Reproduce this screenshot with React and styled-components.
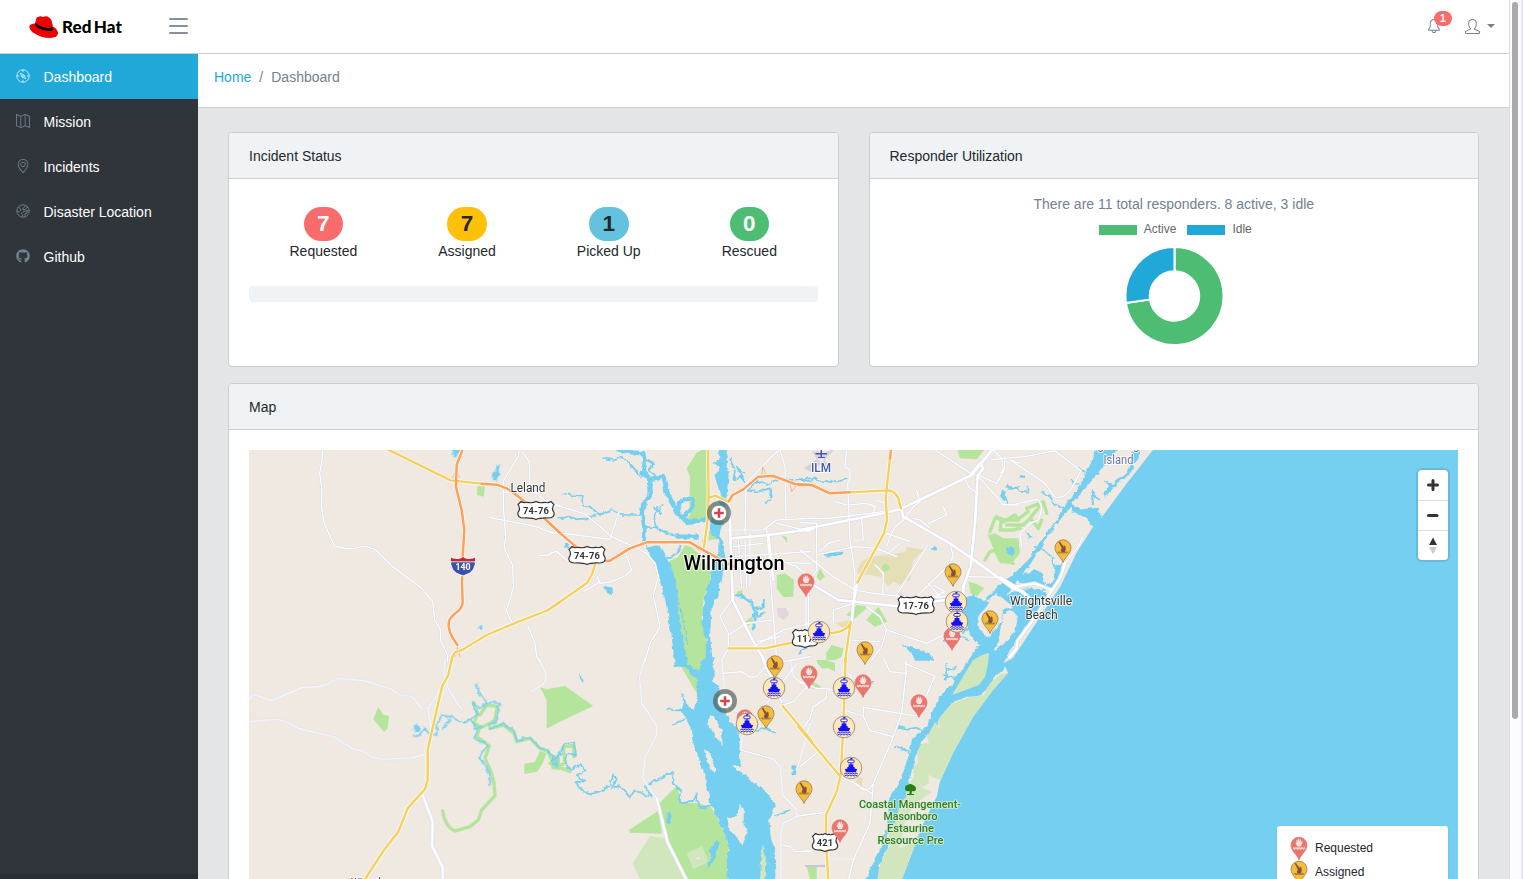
import React from "react";
import styled, { createGlobalStyle } from "styled-components";
import { SlMap, SlLocationPin, SlBell, SlUser } from "react-icons/sl";
import { FaGithub } from "react-icons/fa";

const GlobalStyle = createGlobalStyle`
  *, *::before, *::after { box-sizing: border-box; }
  html, body { margin: 0; height: 100%; overflow: hidden; }
  body {
    font: 14px/21px "Liberation Sans", Arial, sans-serif;
    color: #23282c;
    background: #e4e5e6;
  }
`;

const Frame = styled.div`
  display: flex;
  width: 100vw;
  height: 100vh;
  overflow: hidden;
`;
const Page = styled.div`
  flex: 1;
  min-width: 0;
  display: flex;
  flex-direction: column;
`;
const ScrollTrack = styled.div`
  width: 14px;
  padding: 2px 0 0 2px;
  background: #fcfcfc;
  border-left: 1px solid #dcdde2;
  border-right: 2px solid #e8e8ee;
`;
const ScrollThumb = styled.div`
  width: 6px;
  height: 717px;
  border-radius: 3px;
  background: #a9a9ae;
`;

const TopBar = styled.header`
  height: 54px;
  flex: none;
  display: flex;
  align-items: center;
  background: #fff;
  border-bottom: 1px solid #c8ced3;
  color: #73818f;
`;
const Brand = styled.div`
  width: 155px;
  padding-left: 29px;
  display: flex;
  align-items: center;
`;
const BrandHat = styled.svg`
  width: 30px;
  height: 23px;
  margin: 2px 3px 0 0;
`;
const BrandName = styled.span`
  font: 900 17px/20px Lato, sans-serif;
  letter-spacing: 0.1px;
  word-spacing: -2px;
  color: #000;
`;
const MenuButton = styled.div`
  width: 19px;
  height: 16px;
  margin: 0 0 1px 13.5px;
  display: flex;
  flex-direction: column;
  justify-content: space-between;
`;
const MenuBar = styled.i`
  height: 2px;
  border-radius: 1px;
  background: #84919d;
`;
const Tools = styled.div`
  margin-left: auto;
  padding: 0 14px 1px 0;
  display: flex;
  align-items: center;
`;
const Alerts = styled.div`
  position: relative;
  width: 14px;
  height: 14px;
  margin-right: 24px;
  font-size: 14px;
  line-height: 0;
`;
const AlertCount = styled.span`
  position: absolute;
  left: 7px;
  top: -8px;
  width: 18px;
  height: 15px;
  border-radius: 8px;
  background: #f86c6b;
  color: #fff;
  font: 700 10.5px/15px "Liberation Sans", sans-serif;
  text-align: center;
`;
const UserMenu = styled.div`
  display: flex;
  align-items: center;
  font-size: 15px;
`;
const Caret = styled.i`
  margin-left: 7px;
  border: 4px solid transparent;
  border-top-color: #73818f;
  border-bottom: 0;
`;

const Body = styled.div`
  flex: 1;
  min-height: 0;
  display: flex;
`;
const Sidebar = styled.nav`
  width: 198px;
  flex: none;
  display: flex;
  flex-direction: column;
  background: #2f353a;
`;
const NavItem = styled.a`
  height: 45px;
  flex: none;
  display: flex;
  align-items: center;
  gap: 14px;
  padding: 1px 16px 0 15.5px;
  color: #fff;
  background: ${(p) => (p.$active ? "#20a8d8" : "transparent")};
  svg {
    width: 14px;
    height: 14px;
    margin-top: -2px;
    color: ${(p) => (p.$active ? "#d2eef7" : "#73818f")};
  }
`;
const SidebarFoot = styled.div`
  margin-top: auto;
  height: 5px;
  background: #292e33;
`;
const Main = styled.main`
  flex: 1;
  min-width: 0;
  display: flex;
  flex-direction: column;
`;
const Breadcrumb = styled.div`
  height: 54px;
  flex: none;
  padding: 13px 16px;
  display: flex;
  gap: 8px;
  background: #fff;
  border-bottom: 1px solid #c8ced3;
  color: #73818f;
`;
const CrumbLink = styled.a`
  color: #20a8d8;
`;
const Content = styled.div`
  padding: 24px 30px 0;
  display: flex;
  flex-direction: column;
  gap: 16px;
`;
const CardRow = styled.div`
  display: grid;
  grid-template-columns: 1fr 1fr;
  gap: 30px;
`;
const Card = styled.section`
  height: ${(p) => p.$height}px;
  background: #fff;
  border: 1px solid #c8ced3;
  border-radius: 4px;
  overflow: hidden;
`;
const CardHeader = styled.div`
  height: 46px;
  padding: 13px 20px 11px;
  background: #f0f3f5;
  border-bottom: 1px solid #c8ced3;
`;
const CardBody = styled.div`
  padding: ${(p) => p.$top}px 20px 20px;
`;
const StatRow = styled.div`
  display: flex;
  justify-content: space-around;
`;
const Stat = styled.div`
  display: flex;
  flex-direction: column;
  align-items: center;
`;
const StatBadge = styled.span`
  height: 34px;
  padding: 0 13.5px;
  border-radius: 17px;
  font: 700 22.5px/34px "Liberation Sans", sans-serif;
  background: ${(p) => p.$bg};
  color: ${(p) => p.$fg};
`;
const Progress = styled.div`
  height: 16px;
  margin-top: 24px;
  border-radius: 4px;
  background: #f0f3f5;
`;
const Utilization = styled.div`
  display: flex;
  flex-direction: column;
  align-items: center;
  color: #73818f;
`;
const ChartLegend = styled.div`
  display: flex;
  gap: 11px;
  margin: 7px 0 11px;
  padding-left: 3px;
  color: #666;
  font-size: 12px;
  line-height: 14px;
`;
const LegendEntry = styled.span`
  display: flex;
  align-items: flex-start;
  gap: 7px;
`;
const Swatch = styled.i`
  width: 38px;
  height: 10px;
  margin-top: 3px;
  background: ${(p) => p.$color};
`;
const Chart = styled.svg`
  width: 99px;
  height: 98px;
  margin-left: 1px;
`;

const MapBox = styled.div`
  position: relative;
  height: 600px;
  overflow: hidden;
`;
const MapCanvas = styled.svg`
  display: block;
  width: 1209px;
  height: 600px;
  background: #efe9e2;
`;
const Controls = styled.div`
  position: absolute;
  top: 20px;
  right: 10px;
  width: 30px;
  border-radius: 4px;
  background: #fff;
  box-shadow: 0 0 0 2px rgba(0, 0, 0, 0.1);
`;
const Control = styled.div`
  height: 30px;
  border-top: ${(p) => (p.$first ? "0" : "1px solid #ddd")};
  svg { display: block; }
`;
const MapLegend = styled.div`
  position: absolute;
  top: 376px;
  right: 10px;
  width: 171px;
  padding: 10px 13px;
  border-radius: 3px;
  background: #fff;
  box-shadow: 0 1px 2px rgba(0, 0, 0, 0.1);
  font-size: 12px;
`;
const MapLegendRow = styled.div`
  height: 24px;
  display: flex;
  gap: 7px;
  line-height: 25px;
  svg { flex: none; }
`;

const C = {
  water: "#75cff0",
  land: "#efe9e2",
  green: "#b5e59c",
  pale: "#d1e6bd",
  yellow: "#f2d160",
  orange: "#ff9f5e",
};

/* Each tile is drawn at three units per pixel, offset to its own corner. */
const TILES = [
  {
    x: 240, y: 440,
    parks: ["M712,139H735L731,170L711,165Z"],
    lakes: ["M634,10H660V30L656,45L645,50L636,43Z", "M760,97L768,88L770,78L780,76L782,84L776,90L778,104L768,121L758,120Z", "M711,568L717,560L726,558V570Z"],
    white: [
      "M248,30L246,60L239,100L246,150L244,200L252,248L283,318L318,326L348,324L372,318L405,328L460,382L545,445L578,485L584,540L600,565L603,605L623,645V665",
      "M838,30L835,50L808,93L790,122V200L797,292L792,325L818,375L820,445L799,511L815,545",
      "M845,33L868,65L870,130L888,160L920,185L960,197",
      "M747,232L890,260L938,280H960", "M893,348L920,346L948,334L960,344",
      "M790,158L810,155L818,162", "M865,560L885,610L890,650L900,665",
    ],
    yellow: ["M438,26L632,121L725,131", "M960,485L925,510L830,547L740,585L670,628L645,637L636,652V662"],
    orange: ["M725,131L770,134L800,145L828,164L860,190L915,237L960,279", "M668,28L650,75L648,140L665,210L673,270L668,350L666,430L668,485Q668,502 652,515Q630,530 627,545Q622,562 636,590L652,615"],
    ramps: ["M648,92L637,115M650,92L658,112", "M650,615L660,650M652,625L645,650M665,627L655,635"],
  },
  {
    x: 240, y: 660,
    parks: ["M415,140L430,165L447,168L443,205L432,216L400,178Z", "M900,82L920,88L975,78L1060,138L960,185L920,206V120Z", "M853,312L885,305L900,272L920,280L908,310L892,335L853,342Z", "M925,280L960,290V330L935,328Z"],
    greenLines: ["M703,130L712,160L702,190L725,202L750,190L765,180L772,140L740,135L720,165", "M720,200L710,230L735,248L748,258L735,295L755,340L762,370L765,407L725,450L715,480L690,500L645,513Q615,500 608,453", "M750,205L790,195L822,220L830,245L870,235L900,265L925,275L945,320"],
    streams: ["M712,73L713,98L730,112L742,128L778,128L776,150L765,187L750,190V207L790,190L822,212L830,240L870,232L900,265L920,268L940,290V310L948,318L950,290L960,278", "M520,230L535,228L555,205L570,222L590,225L592,190L608,163L628,170L672,188L695,180L715,160L700,145V128L715,145L742,128", "M608,205L632,180", "M695,180L705,205L728,200", "M710,205L706,240L735,248L742,260L717,290L740,320L750,355V375"],
    lakes: ["M522,195L530,190L539,196V212L522,216Z"],
    white: [
      "M27,120L40,103L95,122L185,83L235,80L260,73L295,55L375,63L455,88L475,103L518,112L545,145H565L600,88",
      "M27,185L110,178L150,190L180,207L285,232L340,268L365,272L395,290L425,298L520,294L555,282",
      "M565,147L574,215", "M615,0L612,40L625,85L655,135L668,150", "M898,0L918,40V60L910,72L875,95",
    ],
    wide: ["M548,405L578,485L576,558L608,622V720"],
    yellow: ["M636,-5L625,45L606,80L563,270V360L555,387L503,445L475,515L432,570L370,665"],
  },
  {
    x: 550, y: 440,
    parks: ["M440,38L455,30H470L472,236L405,246L420,225L418,190L420,110L410,85Z", "M405,315L425,322L450,345L480,387L482,425L462,470L455,530L470,600L468,665L440,760L385,665L355,480L355,365L385,350Z", "M680,405L705,400L732,420L730,470L700,472L680,445Z", "M695,287L710,290L712,308Z", "M560,455L578,450V465L562,468Z", "M580,548L605,530L612,545L590,560Z", "M478,275L508,295L475,302Z", "M318,385L338,405L335,418L322,412Z"],
    lakes: [
      "M505,5H535L530,80L536,105L528,190L520,240L508,285L525,320L522,365L516,420L505,462L485,500L480,590L490,680H465L470,600L455,560L456,530L463,475L480,425L485,385L505,340V300L478,275L480,245L500,210L512,170L495,110L510,80L490,70L508,60Z",
      "M288,318L328,320L360,365L378,430L384,500L395,570L415,680H375L364,580L350,500L335,440L318,385Z",
      "M160,435L172,440L185,442L186,466L165,455Z", "M45,303L60,315L55,328L45,318Z",
    ],
    rivers: ["M205,30L250,38L280,40L285,70L278,98L300,118L302,160L275,210L283,260L282,300", "M285,100L300,118L340,108L350,155L380,215L410,246L438,243L467,240", "M380,215L388,190L405,175L427,178L430,195L402,232", "M385,290L440,290"],
    streams: ["M285,55L312,70L295,90L315,105", "M155,55L195,60L215,50L235,65L275,112", "M40,160L72,168L95,170L98,195L125,205L150,225", "M25,235L60,230L80,238L110,235L150,222L185,210L210,225L275,225", "M283,260L320,263L350,280L385,285M320,263L310,235L325,200M325,215L338,195M315,205L330,220", "M390,320L380,340L355,355", "M540,60L555,90L550,120L570,110L585,125L560,80L580,100", "M595,152L620,122L650,135L690,115L720,120L780,115M590,152L625,155L660,145L665,170L650,188"],
    creek: ["M555,465L578,470L603,487L610,505L640,502V478M613,508L612,565M610,505L625,530L640,520"],
    white: ["M0,190L50,205L105,222L185,290L240,315L290,340L315,370L325,410L310,465L330,560L300,610L285,665", "M0,275L180,298L208,212", "M0,340L20,333L50,360L75,370L150,370L180,362", "M228,345L245,390L225,408L185,425L150,430L142,410M150,425L100,455", "M585,280L588,130L660,55L688,30", "M690,30L705,80L708,240", "M520,270L640,270L680,240L780,235", "M550,350L780,335M550,320L640,310", "M565,300L575,445M585,300L590,440M650,265L680,660M600,280L600,435", "M680,250L780,275", "M655,350L740,380L780,410", "M535,585L590,550L665,540M610,620L700,570L780,550", "M545,480L510,530L535,580V625L515,660", "M620,605L690,590", "M768,475V590", "M640,365L780,370"],
    wide: ["M538,190L548,480L610,605L645,665", "M545,295L655,285L790,267", "M655,285L670,420"],
    yellow: ["M474,28L476,170M480,172L495,167L535,185", "M476,170L474,230L462,322", "M-5,510L110,430L125,405L135,375", "M535,625H645L735,606"],
    orange: ["M-5,247L45,292L90,330L120,362L180,362L240,325L290,307H420L450,325L500,352L550,380", "M537,183L548,165L580,148L625,110L670,108L735,132L785,135"],
    ramps: ["M420,309L445,330L462,330L458,300M635,108L638,80L650,108M720,130L725,155L740,135"],
  },
  {
    x: 550, y: 660,
    parks: ["M383,375L392,430L430,428L480,438L505,478L520,510L537,560L530,600L535,665H412L352,545L328,430Z", "M237,510L325,452L336,521L240,518Z", "M410,0L460,0L445,35L420,18Z"],
    pale: ["M300,528L345,535L350,545L405,665H275L247,612Z", "M410,580L457,558L475,605L430,628Z"],
    lakes: [
      "M383,-3L420,18L445,35L460,-5H492L490,65L508,85L510,110L540,185L565,200L572,318H548L590,350L650,395L675,440L658,480L662,530L675,570L677,720H535L530,600L537,560L520,510L480,430L468,355L430,250L420,200L395,150L403,125L430,150L440,120L443,60L405,20Z",
      "M350,460L358,453L365,465L360,492L350,488Z", "M490,552L500,543L512,548L500,580L490,605L470,628L485,590L478,572Z", "M727,318L740,312L738,345L728,342Z", "M87,38L101,65L98,68L90,55Z",
    ],
    land: ["M480,165L493,172L505,190L515,215L518,255L500,235L475,195Z", "M462,268L480,278L495,320V340L480,325Z", "M535,470L560,472L570,430L582,450L580,490L593,515L577,557L555,525L535,512Z", "M438,595L450,590V598L440,600Z"],
    pale2: ["M638,548L647,590L645,665H630L633,600Z"],
    greenLines: ["M0,290L20,320L45,310L40,260L70,255L72,290M0,310L60,335"],
    streams: ["M0,275L10,300L30,285L40,250L72,245L78,285L50,280L45,310L65,330L90,312L108,333L80,345L105,365L78,362L85,380L115,402L145,397L180,375L190,342L200,358L185,385L210,378L240,412L255,390L285,405L305,410L285,378L330,355L370,335L368,370L390,390V430L430,425L438,402L443,430L455,445L485,435", "M400,102L403,145L410,170M355,148L402,153M370,193L410,175", "M620,210L650,205L675,217M675,468L718,450"],
    white: ["M285,-5L268,50L275,130L318,195L320,225L285,290L278,355L320,415", "M515,0L525,120L575,170L590,200L575,235L572,270L670,297L690,320L698,405L740,450V470L700,490L692,520V720", "M520,40L575,35L600,52L620,50L650,15L780,-10", "M650,130L740,10M780,190L740,330", "M695,555L720,560L735,575H780M738,470L780,462", "M700,135L730,125L780,70M720,0L730,50L780,90"],
    wide: ["M320,415L352,545L412,665", "M636,-8L695,125"],
    yellow: ["M698,138L785,243"],
  },
  {
    x: 800, y: 440,
    parks: ["M472,30H553L530,58L480,55Z", "M245,378L258,370L270,382L262,395L248,392Z", "M138,525L170,495L205,500L165,535Z", "M198,540L235,500L262,545L225,560Z", "M505,425L530,432L552,445L530,470L512,460Z", "M78,640L95,615L130,625L125,650L105,660H80Z", "M50,410L60,385L75,410L60,422Z"],
    sand: ["M205,350L262,345L318,335L320,320L370,330L340,360L330,420L300,435L280,425L265,440L240,410L170,400L180,370Z", "M105,550L150,540L140,570Z"],
    greenLines: ["M570,275L585,235L605,235L600,270L640,270L660,265M590,230L610,245L645,225L655,240", "M555,360L570,335L585,330L600,360L640,370"],
    streams: ["M0,120L30,123L45,112L60,125L95,122L110,125L140,118", "M625,150L640,140L660,140M605,152L620,190", "M305,615L340,628L370,640L400,660", "M0,640L20,620"],
    lakes: ["M75,340L130,335L128,344L75,350Z", "M396,322L411,320V334H398Z", "M315,618L345,625L375,632L400,652L390,662H345L335,638Z"],
    white: ["M140,30L135,80L150,90V120L143,130L150,300L165,400L160,480L155,545", "M0,235L85,235L250,215", "M105,185L140,195L200,190L225,200L220,220M225,180L260,190", "M0,248L50,250V390L30,420L0,440", "M0,330L50,370L100,410L165,450L220,460L350,475L440,470", "M50,345L165,320L230,325L290,350M60,335L85,310L120,300", "M185,235L190,300L160,300", "M310,240L285,260L270,290L260,320M260,280L330,305M300,310L265,340", "M303,205L310,240L340,200L360,185L350,150M340,235L360,240L390,265M385,250L440,225L430,200", "M225,375L250,400L248,465M290,465L383,315M350,470L435,385M400,435L435,455L360,490", "M420,470L385,430M450,310L460,350L440,385", "M405,30L520,105M495,120L510,145L535,160M535,105L590,130L610,95L605,55L580,30M630,60L660,70M535,110L590,170L610,195L660,195", "M500,410L610,412M200,500L240,530L260,570L380,610L440,580M260,570L245,620L215,660M150,600L240,605", "M0,435L40,435M25,440V560M160,490L100,510V545"],
    wide: ["M0,270L250,220L300,208L515,105L578,28", "M303,205L310,230L450,310L515,355L640,445L670,455", "M533,105L525,250L512,380L490,440", "M40,435L115,480L230,492L300,500L435,480L490,465V440", "M515,100L540,70L550,85L535,105", "M172,428L160,490L155,545"],
    yellow: ["M270,55L257,175L261,240L252,280L172,428", "M148,157L262,151Q285,152 295,175L303,205", "M90,580Q120,578 135,567Q150,558 152,545L135,665"],
    orange: ["M273,28L270,55", "M-5,135H35L90,160L148,157"],
  },
  {
    x: 800, y: 660,
    parks: ["M50,0H80L105,10V35L85,25L65,25L52,10Z", "M35,62L65,80L35,87Z", "M20,620H50V657H30Z"],
    sand: ["M175,350L188,355L185,380L165,370Z"],
    streams: ["M290,200L325,207L350,203L370,215M285,258L305,265L330,280M440,10L437,60M430,45L470,55M445,30L470,20M210,68H218"],
    white: ["M250,-5L270,35L320,40M315,10L405,48L380,105L348,168L300,160L190,142V170L210,212L280,230M130,150L190,168", "M318,0L318,40L305,160L280,230L220,370L210,490L160,600L145,660", "M120,350L170,372L190,390L210,385L220,370M165,372L215,400", "M0,65L50,85L95,87M80,95L78,115L40,140L30,175L10,205M0,320L50,278M0,467L75,457M88,597L165,597M0,575L40,570", "M80,90L110,90M145,40L155,50L135,60"],
    yellow: ["M137,-5L130,200L122,345L110,395L78,465V540L85,665", "M-5,200L120,348"],
  },
  {
    x: 1000, y: 440,
    greenLines: ["M0,240L50,240L85,215L80,205L120,190M20,255H70L90,235L110,210L130,185L140,220M95,240L115,265L125,240"],
    parks: ["M-37,285L-15,280L10,295L55,295L60,340L35,370H0L-20,325Z"],
    lakes: ["M20,325L35,318L45,330L40,348L20,342Z", "M0,155L12,150L25,192L8,180Z", "M78,275L98,293L85,298Z", "M60,105L72,108V115L60,112Z"],
    streams: ["M22,140L55,145L60,155L85,158V140", "M125,158L145,165L165,195L190,202", "M105,320L135,332L158,355L160,375L180,400"],
    white: ["M-30,60L10,55L75,50L165,32L243,92L215,145Q190,180 163,170L135,130L35,62M15,58L12,90L0,100", "M0,192L35,195L80,185L110,178Q130,190 122,220L115,240L90,250L60,280L65,320", "M248,290L235,320L195,370"],
    wide: ["M0,412L45,440L105,430L155,450M45,440L85,470", "M195,370L180,415L150,460L110,525L52,603L50,625L28,652"],
  },
];

function TileLayer({ children }) {
  return TILES.map((t) => (
    <g key={`${t.x}-${t.y}`} transform={`translate(${t.x} ${t.y}) scale(0.333333)`}>
      {children(t)}
    </g>
  ));
}
const Shapes = ({ list = [], fill }) => list.map((d, i) => <path key={i} d={d} fill={fill} />);
const Lines = ({ list = [], color, width }) =>
  list.map((d, i) => (
    <path key={i} d={d} fill="none" stroke={color} strokeWidth={width * 3} strokeLinejoin="round" strokeLinecap="round" />
  ));

function Ocean() {
  return (
    <path fill={C.water} d="M1153,450L1127,483L1102,517L1093,527L1077,552L1060,587L1040,617L1023,643L1013,658L1004,663L1008,673L993,690L973,717L953,753L933,797L917,840L902,879V1060H1480V450Z" />
  );
}
function Sound() {
  return (
    <g>
      <path fill={C.water} d="M1100,440H1118V450L1105,464L1094,478L1084,490L1073,503L1064,515L1052,530L1042,546L1029,566L1022,575L1006,594L1022,589L1034,588L1051,594L1041,612L1027,625L1020,637L1010,650L1004,662L1007,667L993,678L987,690L978,696L966,697L955,702L944,713L932,731L921,742L915,758L911,774L906,795L898,820L888,834L887,850L880,863L876,890H862L870,869L880,848L887,828L889,800L900,780L909,755L912,740L926,727L933,710L940,696L956,679L970,658L979,645L970,635L964,617L960,600L972,595L984,601L1001,583L1013,575L1030,558L1041,540L1057,520L1067,503L1079,487L1087,472Z" />
      <path fill={C.water} d="M1069,503L1082,509L1098,508L1102,517L1093,527L1088,519L1072,511Z" />
      <path fill={C.water} d="M1134,440H1141V450L1136,462L1130,474L1117,484L1108,494L1104,498L1103,493L1109,486L1104,480L1112,484L1127,472L1131,461Z" />
      <path fill={C.water} d="M1062,563L1059,578L1052,589L1041,590L1053,580L1056,566ZM1010,579L1027,573L1035,568L1042,574L1045,585L1024,584Z" />
      <path fill={C.land} d="M986,606L993,599L1003,610L1001,622L989,637L979,630L978,618ZM1003,614L1012,610L1018,617L1015,632L1003,645L994,650L999,637ZM986,601L996,594L1006,601L1014,607L1003,609Z" />
      <path fill="none" stroke={C.water} strokeWidth="2" d="M964,612L950,603M969,640L956,635L944,640M975,626L963,632M968,673L974,667M1086,472L1078,468M1078,485L1070,480M1093,505L1092,492L1100,500" />
    </g>
  );
}
function BarrierIslands() {
  return (
    <g>
      <path fill={C.pale} d="M1008,673L1001,674L990,683L984,695L967,698L951,704L940,717L938,721L940,729L935,722L927,737L929,743L921,744L917,752L918,763L913,768L914,777L907,787L906,797L900,803L896,820L889,835L890,846L887,849L879,868L876,890H899L902,879L917,840L933,797L953,753L973,717L993,690Z" />
      <path fill={C.pale} d="M973,660L982,655L989,653L988,664L985,677L979,685L952,695Z" />
      <path fill={C.land} d="M928,775L940,780L937,796L914,842L899,849L905,822L913,805L932,792L922,788L929,783Z" />
    </g>
  );
}

function Pin({ x, y, kind }) {
  const assigned = kind === "assigned";
  return (
    <g transform={`translate(${x} ${y + 8.8})`}>
      <path
        d="M0,14.7C-1.3,10 -8,5.8 -8,0A8,8 0 0 1 8,0C8,5.8 1.3,10 0,14.7Z"
        fill={assigned ? "#f6bd3d" : "#e9756f"}
        stroke={assigned ? "#9a7a45" : "#e9756f"}
        strokeWidth=".8"
      />
      {assigned ? (
        <g fill="#80533f">
          <path d="M-4.4,-5.8L-3,-6.2L-1,-3L0,-2.6L.6,-.8L1.3,-2.4L2.4,-1.8L2.8,1.9L1.6,4.4H-1.2L-2.4,2.2L-1.2,1L-2,-1.4Z" />
          <path d="M-5.2,3.8H5.2V4.8L4,5.8H-4L-5.2,4.8Z" opacity=".55" />
        </g>
      ) : (
        <g fill="#fbe2dc">
          <path d="M-3.6,-2.2L-2.6,-2.4L-2.4,-5.4H-1.5L-1.2,-3.2L-.9,-6.4H.1L.4,-3.4L.9,-6H1.8L1.9,-2.6L2.6,-4.2H3.4L3.2,-1.2L1.8,1.2H-1.6Z" />
          <path d="M-6,1.8L-4.4,2.6L-2.9,1.8L-1.5,2.6L0,1.8L1.5,2.6L2.9,1.8L4.4,2.6L6,1.8V3.8L4.4,4.6L2.9,3.8L1.5,4.6L0,3.8L-1.5,4.6L-2.9,3.8L-4.4,4.6L-6,3.8Z" opacity=".85" />
        </g>
      )}
    </g>
  );
}
function Boat({ x, y }) {
  return (
    <g transform={`translate(${x} ${y})`}>
      <circle r="10.8" fill="#fde7b7" stroke="#8a8172" strokeWidth=".8" />
      <path d="M-.6,-10H1.4V-9H.5V-8H-.6Z" fill="#1212f5" />
      <rect x="-3.2" y="-8" width="6.4" height="2.8" rx="1" fill="#fff6dc" stroke="#1212f5" strokeWidth=".9" />
      <path d="M-.6,-5H.6V-3.6H2.4V-1H3.6V.4L6.2,1.2L4.8,4.2H-4.8L-6.2,1.2L-3.6,.4V-1H-2.4V-3.6H-.6Z" fill="#1212f5" />
      <path d="M-6.8,6L-5.1,5L-3.4,6L-1.7,5L0,6L1.7,5L3.4,6L5.1,5L6.8,6M-6.4,8L-4.8,7.1L-3.2,8L-1.6,7.1L0,8L1.6,7.1L3.2,8L4.8,7.1L6.4,8" fill="none" stroke="#1212f5" strokeWidth=".9" />
    </g>
  );
}
function Hospital({ x, y }) {
  return (
    <g transform={`translate(${x} ${y})`}>
      <circle r="12" fill="#4c4c4c" fillOpacity=".62" />
      <circle r="7.8" fill="#fff" stroke="#4d9b78" strokeWidth=".8" />
      <path d="M-4.8,0H4.8M0,-4.8V4.8" stroke="#d3444c" strokeWidth="2.6" />
    </g>
  );
}
function Shield({ x, y, w, label }) {
  const h = w / 2;
  return (
    <g transform={`translate(${x} ${y})`}>
      <path
        d={`M${-h + 3},-9Q${-h + 6},-7 ${-h + 9},-8.2Q-3,-7 0,-9Q3,-7 ${h - 9},-8.2Q${h - 6},-7 ${h - 3},-9L${h},-6Q${h - 3},-2 ${h},2Q${h + 1},7 ${h - 5},7.5Q4,7 0,9Q-4,7 ${-h + 5},7.5Q${-h - 1},7 ${-h},2Q${-h + 3},-2 ${-h},-6Z`}
        fill="#fff" stroke="#333" strokeWidth="1.2"
      />
      <text y="3.7" textAnchor="middle" fontFamily="Roboto" fontWeight="700" fontSize="9.3" letterSpacing=".2" fill="#333">{label}</text>
    </g>
  );
}
function Label({ x, y, size, width, weight = 400, color = "#333", halo = "#fff", children }) {
  return (
    <text
      x={x} y={y} textAnchor="middle" fontFamily="Roboto, sans-serif" fontSize={size} fontWeight={weight}
      textLength={width} lengthAdjust="spacingAndGlyphs" fill={color} stroke={halo} strokeWidth="2"
      strokeLinejoin="round" strokeOpacity=".85" paintOrder="stroke"
    >
      {children}
    </text>
  );
}

const REQUESTED = [[806, 573], [952, 627], [809, 665], [863, 674], [919, 694], [745, 709], [840, 819]];
const ASSIGNED = [[1063, 539], [953, 563], [990, 610], [865, 641], [775, 655], [766, 705], [804, 780]];
const BOATS = [[956, 602], [957, 621.5], [819, 632], [774, 688], [747, 724], [844, 688], [844, 727], [851, 768]];

function CoastMap() {
  return (
    <MapCanvas viewBox="249 450 1209 600">
      <defs>
        <filter id="shoreline" filterUnits="userSpaceOnUse" x="230" y="430" width="1250" height="640" colorInterpolationFilters="sRGB">
          <feTurbulence type="fractalNoise" baseFrequency="0.18" numOctaves="2" seed="4" />
          <feDisplacementMap in="SourceGraphic" scale="5" xChannelSelector="R" yChannelSelector="G" />
        </filter>
      </defs>
      <TileLayer>{(t) => (<>
        <Shapes list={t.sand} fill="#e5dfb8" />
        <Shapes list={t.parks} fill={C.green} />
        <Shapes list={t.pale} fill={C.pale} />
        <Lines list={t.greenLines} color={C.green} width={3.4} />
      </>)}</TileLayer>
      <path d="M777,608H786L789,614L784,620L778,616ZM900,592L906,598L898,599Z" fill="#e6d3dc" />
      <path d="M804,468L830,450H834L812,473ZM812,452L824,468L829,466L818,451Z" fill="#d3d2de" />
      <path d="M805,865H825V867H805Z" fill="#c6c5da" />
      <Ocean />
      <g filter="url(#shoreline)">
        <Sound />
        <TileLayer>{(t) => (<>
          <Shapes list={t.lakes} fill={C.water} />
          <Lines list={t.rivers} color={C.water} width={4.4} />
          <Lines list={t.creek} color={C.water} width={2.8} />
          <Lines list={t.streams} color={C.water} width={1.7} />
          <Shapes list={t.land} fill={C.land} />
          <Shapes list={t.pale2} fill={C.pale} />
        </>)}</TileLayer>
        <path d="M675,584L679,604L683,620L688,646" fill="none" stroke={C.water} strokeWidth="1.2" strokeDasharray="5 1" />
      </g>
      <BarrierIslands />
      <TileLayer>{(t) => (<>
        <Lines list={t.white} color="#d9dcea" width={2.2} />
        <Lines list={t.wide} color="#d9dcea" width={4} />
      </>)}</TileLayer>
      <TileLayer>{(t) => (<>
        <Lines list={t.white} color="#fff" width={1.2} />
        <Lines list={t.wide} color="#fff" width={2.6} />
      </>)}</TileLayer>
      <TileLayer>{(t) => (<>
        <Lines list={t.ramps} color={C.orange} width={0.7} />
        <Lines list={t.yellow} color="#fffdf5" width={3.8} />
        <Lines list={t.orange} color="#fffdf5" width={3.8} />
      </>)}</TileLayer>
      <TileLayer>{(t) => (<>
        <Lines list={t.yellow} color={C.yellow} width={2.4} />
        <Lines list={t.orange} color={C.orange} width={2.5} />
      </>)}</TileLayer>

      <Label x={528} y={491.5} size={12} width={35}>Leland</Label>
      <Label x={734} y={570} size={20} width={101} weight={500} color="#000">Wilmington</Label>
      <Label x={1041} y={605} size={12} width={62}>Wrightsville</Label>
      <Label x={1041.5} y={619} size={12} width={32}>Beach</Label>
      <Label x={1118.5} y={463.5} size={12} width={30} color="#6b76ae">Island</Label>
      <Label x={1119} y={448.5} size={12} width={62} color="#6b76ae">Figure Eight</Label>
      <Label x={821} y={472} size={12} width={20} weight={500} color="#4257bb">ILM</Label>
      <path d="M820.5,450H822V453H827V454.5H822V457H825V458H818V457H820.5V454.5H815.5V453H820.5Z" fill="#4257bb" />
      <g>
        <Label x={910} y={807.5} size={11} width={102} weight={500} color="#2f7d25" halo="#dcebd0">Coastal Mangement-</Label>
        <Label x={910.5} y={819.5} size={11} width={54} weight={500} color="#2f7d25" halo="#dcebd0">Masonboro</Label>
        <Label x={910.5} y={832} size={11} width={47} weight={500} color="#2f7d25" halo="#dcebd0">Estaurine</Label>
        <Label x={910.5} y={844} size={11} width={66} weight={500} color="#2f7d25" halo="#dcebd0">Resource Pre</Label>
      </g>
      <path d="M905,788Q905,785 908,785Q910,783 913,785Q916,786 916,789Q916,792 912,791L911.5,794H914V795H907V794H909.5V791Q905,792 905,788Z" fill="#26800f" />
      <Label x={374} y={887.4} size={12} width={46}>Winnabow</Label>

      <g transform="translate(463 566)">
        <path d="M-12,-8.5Q-10,-7 -8,-7.5Q-3,-6 0,-9Q3,-6 8,-7.5Q10,-7 12,-8.5Q15,6 0,10Q-15,6 -12,-8.5Z" fill="#3f50a8" stroke="#fff" strokeWidth="1" />
        <path d="M-12,-8.5Q-10,-7 -8,-7.5Q-3,-6 0,-9Q3,-6 8,-7.5Q10,-7 12,-8.5V-4.5H-12Z" fill="#c9292b" />
        <path d="M-12.5,-4.2H12.5" stroke="#fff" strokeWidth=".8" />
        <text y="4.2" textAnchor="middle" fontFamily="Roboto" fontWeight="700" fontSize="8.8" fill="#fff">140</text>
      </g>
      <Shield x={536} y={510.5} w={36} label="74-76" />
      <Shield x={587} y={555.5} w={36} label="74-76" />
      <Shield x={916} y={605.5} w={36} label="17-76" />
      <Shield x={805} y={638.5} w={25} label="117" />
      <Shield x={825} y={842.5} w={25} label="421" />

      <Hospital x={719} y={513} />
      <Hospital x={725} y={701} />
      {REQUESTED.map(([x, y]) => <Pin key={`${x}${y}`} x={x} y={y} kind="requested" />)}
      {ASSIGNED.map(([x, y]) => <Pin key={`${x}${y}`} x={x} y={y} kind="assigned" />)}
      {BOATS.map(([x, y]) => <Boat key={`${x}${y}`} x={x} y={y} />)}
    </MapCanvas>
  );
}

function CompassIcon() {
  return (
    <svg viewBox="0 0 14 14" fill="none" stroke="currentColor" strokeWidth=".9" strokeLinejoin="round">
      <circle cx="7" cy="7" r="6.2" />
      <path d="M7,.8V3.2M7,10.8V13.2M.8,7H3.2M10.8,7H13.2" />
      <path d="M4.4,4.4L8.2,6L9.6,9.6L5.8,8Z" />
      <circle cx="7" cy="7" r=".5" />
    </svg>
  );
}
function EarthIcon() {
  return (
    <svg viewBox="0 0 14 14" fill="none" stroke="currentColor" strokeWidth=".9" strokeLinejoin="round">
      <circle cx="7" cy="7" r="6.2" />
      <path d="M2.1,3.2L4.5,4.8L4.7,6.2L3.3,7.6L1.1,7.8" />
      <path d="M9.3,1.4L8.5,3.2L6.9,4.4L7,6L9.4,5.4L10.8,3.4L12.1,3.6" />
      <path d="M13.1,7.2L10.7,6.6L6.7,8L5.3,9.4L6.6,10.8L6.7,13M10.7,6.8L11.1,9L9,9.8L9.1,12.6" />
    </svg>
  );
}

function RedHatMark() {
  return (
    <BrandHat viewBox="0 0 30 23">
      <path d="M7,3.5Q7,1 9.5,.8Q11,0 12.5,.5Q14,1.3 15.5,.5Q18,-.2 20,1.5Q22,2.5 22.7,5L24,10.5Q28,12.5 29,16.5Q29.5,22 21,22Q12,22 4,16.5Q-.3,13 .5,10Q1.5,7.5 6,7.5Z" fill="#e00" />
      <path d="M6.8,7L6.2,8.6Q6,10 9,12Q15,15.4 22,15Q25,14.5 24,12.5L23.8,10.9Q21,12.8 15.5,11.5Q9.5,10.2 6.8,7Z" fill="#000" />
    </BrandHat>
  );
}

function Doughnut({ active, idle }) {
  const cut = (active / (active + idle)) * Math.PI * 2;
  const at = (r, a) => `${(49.5 + r * Math.sin(a)).toFixed(2)},${(49 - r * Math.cos(a)).toFixed(2)}`;
  const slice = (a, b) => {
    const big = b - a > Math.PI ? 1 : 0;
    return `M${at(49, a)}A49,49 0 ${big} 1 ${at(49, b)}L${at(24.7, b)}A24.7,24.7 0 ${big} 0 ${at(24.7, a)}Z`;
  };
  return (
    <Chart viewBox="0 0 99 98">
      <path d={slice(0, cut)} fill="#4dbd74" stroke="#fff" strokeWidth="2" />
      <path d={slice(cut, Math.PI * 2)} fill="#20a8d8" stroke="#fff" strokeWidth="2" />
    </Chart>
  );
}

const NAV = [
  ["Dashboard", CompassIcon], ["Mission", SlMap], ["Incidents", SlLocationPin],
  ["Disaster Location", EarthIcon], ["Github", FaGithub],
];
const STATS = [
  ["Requested", 7, "#f86c6b", "#fff"], ["Assigned", 7, "#ffc107", "#23282c"],
  ["Picked Up", 1, "#63c2de", "#23282c"], ["Rescued", 0, "#4dbd74", "#fff"],
];

export default function App() {
  return (
    <Frame>
      <GlobalStyle />
      <Page>
        <TopBar>
          <Brand><RedHatMark /><BrandName>Red Hat</BrandName></Brand>
          <MenuButton><MenuBar /><MenuBar /><MenuBar /></MenuButton>
          <Tools>
            <Alerts><SlBell /><AlertCount>1</AlertCount></Alerts>
            <UserMenu><SlUser /><Caret /></UserMenu>
          </Tools>
        </TopBar>
        <Body>
          <Sidebar>
            {NAV.map(([label, Icon], i) => (
              <NavItem key={label} $active={i === 0}><Icon />{label}</NavItem>
            ))}
            <SidebarFoot />
          </Sidebar>
          <Main>
            <Breadcrumb><CrumbLink>Home</CrumbLink><span>/</span><span>Dashboard</span></Breadcrumb>
            <Content>
              <CardRow>
                <Card $height={235}>
                  <CardHeader>Incident Status</CardHeader>
                  <CardBody $top={28}>
                    <StatRow>
                      {STATS.map(([label, value, bg, fg]) => (
                        <Stat key={label}><StatBadge $bg={bg} $fg={fg}>{value}</StatBadge>{label}</Stat>
                      ))}
                    </StatRow>
                    <Progress />
                  </CardBody>
                </Card>
                <Card $height={235}>
                  <CardHeader>Responder Utilization</CardHeader>
                  <CardBody $top={15}>
                    <Utilization>
                      <span>There are 11 total responders. 8 active, 3 idle</span>
                      <ChartLegend>
                        <LegendEntry><Swatch $color="#4dbd74" />Active</LegendEntry>
                        <LegendEntry><Swatch $color="#20a8d8" />Idle</LegendEntry>
                      </ChartLegend>
                      <Doughnut active={8} idle={3} />
                    </Utilization>
                  </CardBody>
                </Card>
              </CardRow>
              <Card $height={690}>
                <CardHeader>Map</CardHeader>
                <CardBody $top={20}>
                  <MapBox>
                    <CoastMap />
                    <Controls>
                      <Control $first>
                        <svg width="30" height="30"><path d="M10.5,15H19.5M15,10.5V19.5" stroke="#333" strokeWidth="3" strokeLinecap="round" /></svg>
                      </Control>
                      <Control>
                        <svg width="30" height="30"><path d="M10.5,14.5H19" stroke="#333" strokeWidth="3" strokeLinecap="round" /></svg>
                      </Control>
                      <Control>
                        <svg width="30" height="30"><path d="M11,14L15,6.5L19,14Z" fill="#333" /><path d="M11,16H19L15,23.5Z" fill="#ccc" /></svg>
                      </Control>
                    </Controls>
                    <MapLegend>
                      <MapLegendRow><svg width="18" height="24"><Pin x={9} y={0.4} kind="requested" /></svg>Requested</MapLegendRow>
                      <MapLegendRow><svg width="18" height="24"><Pin x={9} y={0.4} kind="assigned" /></svg>Assigned</MapLegendRow>
                    </MapLegend>
                  </MapBox>
                </CardBody>
              </Card>
            </Content>
          </Main>
        </Body>
      </Page>
      <ScrollTrack><ScrollThumb /></ScrollTrack>
    </Frame>
  );
}
